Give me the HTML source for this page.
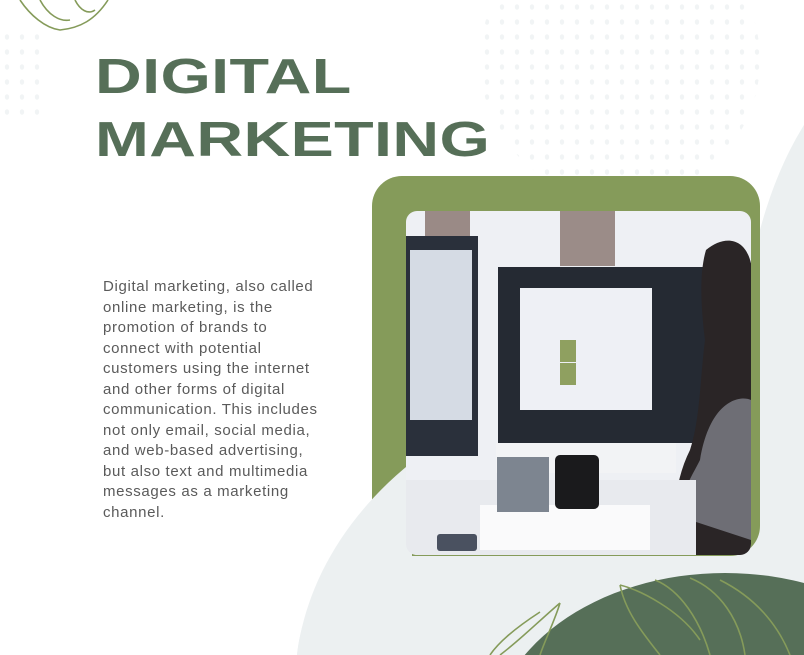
<!DOCTYPE html>
<html><head><meta charset="utf-8"><style>
html,body{margin:0;padding:0;background:#fff;overflow:hidden;}
body{width:804px;height:655px;position:relative;overflow:hidden;font-family:"Liberation Sans",sans-serif;}
svg.bg{position:absolute;left:0;top:0;}
h1{position:absolute;left:95px;top:46px;margin:0;font-size:49px;line-height:63px;font-weight:bold;color:#566f58;transform:scaleX(1.32);transform-origin:0 0;letter-spacing:0.3px;}
p{position:absolute;left:103px;top:277px;margin:0;font-size:15px;line-height:20.5px;color:#5a5a5a;white-space:nowrap;letter-spacing:0.65px;}
</style></head><body>
<svg class="bg" width="804" height="655" viewBox="0 0 804 655">
<defs>
<pattern id="dots" width="15" height="15" patternUnits="userSpaceOnUse"><ellipse cx="7" cy="7" rx="2.2" ry="2.8" fill="#f1f4f5"/></pattern>
<clipPath id="ph"><rect x="406" y="211" width="345" height="344" rx="11"/></clipPath>
</defs>
<circle cx="620" cy="60" r="140" fill="url(#dots)"/>
<rect x="0" y="25" width="40" height="90" fill="url(#dots)"/>
<path d="M804,125 C770,180 755,240 740,320 L720,420 C600,430 420,440 360,520 C320,570 300,620 297,655 L804,655 Z" fill="#ecf0f1"/>
<rect x="372" y="176" width="388" height="380" rx="30" fill="#859b5a"/>
<path d="M297,655 C305,590 340,520 412,462 L412,655 Z" fill="#ecf0f1"/>
<path d="M804,125 C790,150 775,190 760,230 L760,655 L804,655Z" fill="#ecf0f1"/>
<rect x="380" y="556" width="424" height="30" fill="#ecf0f1"/>
<g clip-path="url(#ph)">
<rect x="406" y="211" width="345" height="344" fill="#eef0f4"/>
<rect x="425" y="211" width="45" height="50" fill="#9a8a86"/>
<rect x="560" y="211" width="55" height="55" fill="#9b8c88"/>
<rect x="406" y="236" width="72" height="220" fill="#2a303b"/>
<rect x="410" y="250" width="62" height="170" fill="#d5dbe4"/>
<rect x="498" y="267" width="210" height="176" fill="#252a33"/>
<rect x="520" y="288" width="132" height="122" fill="#eef0f5"/>
<rect x="560" y="340" width="16" height="22" fill="#8fa060"/>
<rect x="560" y="363" width="16" height="22" fill="#8fa060"/>
<rect x="496" y="443" width="180" height="30" fill="#f2f3f5"/>
<path d="M706,250 C730,230 760,240 751,300 L751,555 L680,555 C670,520 675,480 690,450 C700,420 700,380 705,340 C700,300 700,270 706,250Z" fill="#2a2526"/>
<path d="M700,460 C710,400 740,395 751,400 L751,540 L690,520 C675,500 690,480 700,460Z" fill="#6e6e75"/>
<rect x="406" y="480" width="290" height="75" fill="#e8eaee"/>
<rect x="480" y="505" width="170" height="45" fill="#fafafb"/>
<rect x="555" y="455" width="44" height="54" rx="5" fill="#1a1a1c"/>
<rect x="497" y="457" width="52" height="55" fill="#7d8590"/>
<rect x="437" y="534" width="40" height="17" rx="3" fill="#4a5160"/>
</g>
<ellipse cx="725" cy="745" rx="235" ry="172" fill="#566f58"/>
<g fill="none" stroke="#859b5a" stroke-width="1.6">
<path d="M620,585 C640,590 680,610 700,640 M620,585 C625,610 640,630 660,655 M655,580 C680,590 700,620 710,655 M690,578 C720,590 740,620 745,655 M720,580 C760,600 780,630 790,655"/>
<path d="M560,603 C540,620 520,640 500,655 M560,603 C555,620 545,640 540,655 M540,612 C520,625 500,640 490,655"/>
<path d="M20,0 C30,15 45,28 60,30 C80,28 95,20 108,0 M40,0 C48,15 60,22 70,20 M75,0 C80,10 88,15 95,10"/>
</g>
</svg>
<h1>DIGITAL<br>MARKETING</h1>
<p>Digital marketing, also called<br>online marketing, is the<br>promotion of brands to<br>connect with potential<br>customers using the internet<br>and other forms of digital<br>communication. This includes<br>not only email, social media,<br>and web-based advertising,<br>but also text and multimedia<br>messages as a marketing<br>channel.</p>
</body></html>
